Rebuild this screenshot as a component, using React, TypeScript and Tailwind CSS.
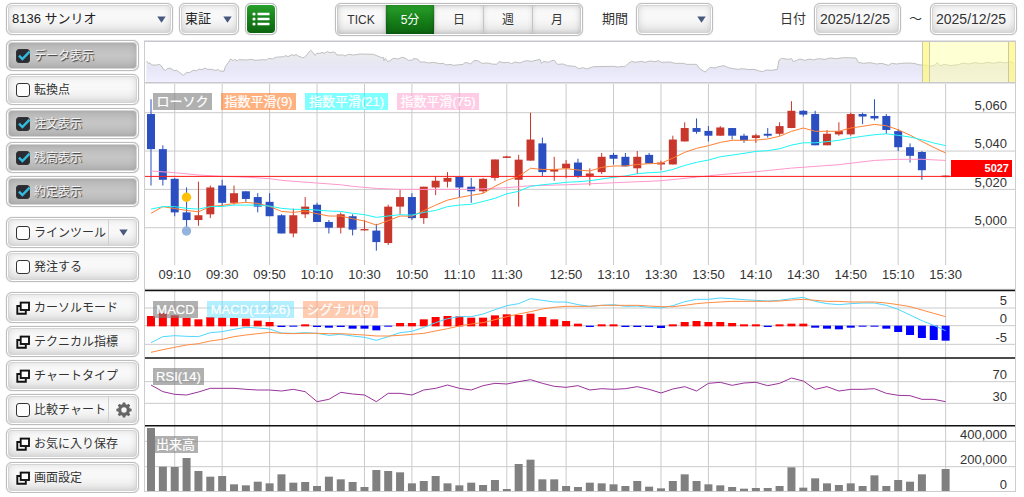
import React, { useState } from "react";

type Candle = ["u" | "d", number, number, number, number];

// Direction, high, body top, body bottom, low. One entry per five minutes of trading.
const candles: (Candle | null)[] = [
  ["d", 5067, 5059.3, 5041, 5022], ["d", 5043, 5041, 5025, 5022], ["d", 5026, 5025.5, 5008, 5006],
  ["d", 5021, 5008, 5004, 4999], ["u", 5024, 5006.5, 5004, 5001], ["u", 5022, 5021, 5007, 5005],
  ["d", 5025, 5022, 5013, 5011], ["u", 5022, 5018, 5013, 5012], ["d", 5019, 5019, 5015, 5013.5],
  ["d", 5018, 5016, 5011, 5008], ["d", 5018, 5013.5, 5006, 5006], ["d", 5007, 5006.5, 4997, 4997],
  ["u", 5010, 5006.5, 4997, 4995], ["u", 5016, 5011, 5007, 5005], ["d", 5013, 5012, 5003, 5003],
  ["d", 5004, 5003, 5000, 4997], ["u", 5008, 5007, 5000, 4997], ["d", 5007, 5006, 4999, 4996],
  ["u", 5004, 4999.3, 4998.6, 4998.6], ["d", 5002, 4998.5, 4992.5, 4988], ["u", 5012, 5011, 4992, 4991],
  ["u", 5020, 5016, 5011, 5007], ["d", 5018, 5016, 5005, 5004], ["u", 5021.4, 5021.4, 5005, 5002],
  ["u", 5027, 5024.5, 5021, 5017], ["u", 5029, 5026, 5024, 5021], ["d", 5026.5, 5026.5, 5021, 5016],
  ["d", 5026, 5021.4, 5019, 5013], ["u", 5026, 5025.5, 5019, 5018], ["u", 5035.6, 5035.6, 5026, 5024.5],
  ["u", 5037.5, 5037.2, 5036.4, 5036.4], ["u", 5038, 5035.5, 5025, 5011], ["u", 5060, 5046, 5035, 5035],
  ["d", 5047, 5044, 5029, 5027], ["u", 5037, 5030.5, 5029.3, 5024.5], ["u", 5035.3, 5033.4, 5031, 5026],
  ["d", 5036, 5034, 5027, 5026], ["u", 5031, 5028.3, 5027, 5022], ["u", 5039, 5037, 5029, 5028],
  ["d", 5039, 5038, 5036, 5033], ["d", 5039, 5037, 5032, 5032], ["u", 5040, 5037, 5031, 5028],
  ["d", 5039, 5038, 5033.5, 5033.5], ["u", 5035, 5034, 5033, 5030], ["u", 5048, 5046, 5033, 5033],
  ["u", 5055, 5052, 5045, 5045], ["d", 5057, 5052, 5050, 5049], ["d", 5053, 5050.5, 5048, 5045],
  ["u", 5053, 5052.3, 5048, 5048], ["d", 5052, 5052, 5048, 5046], ["d", 5049, 5048, 5045.5, 5044.3],
  ["u", 5049, 5048.2, 5046.8, 5044.3], ["d", 5052, 5049, 5048, 5047], ["u", 5055, 5053, 5049, 5048],
  ["u", 5066, 5061, 5052, 5052], ["d", 5061.3, 5061, 5059, 5058], ["d", 5061, 5059.3, 5043, 5043],
  ["u", 5051, 5049, 5043, 5043], ["u", 5055, 5050.4, 5048.7, 5048], ["u", 5060, 5059.3, 5048.7, 5048],
  ["d", 5060, 5059.3, 5058, 5054], ["d", 5067, 5058.3, 5057, 5056], ["d", 5059.3, 5058.3, 5051, 5049],
  ["d", 5051.5, 5050.4, 5042, 5040], ["d", 5044, 5042, 5037.5, 5034], ["d", 5040, 5039.5, 5030, 5025],
  null, ["u", 5027.2, 5027.2, 5026.4, 5026.4],
];

const ema9 = [
  5007.5, 5011, 5010, 5009, 5008.3, 5011.1, 5011.6, 5012.7, 5013.2, 5012.7, 5011.1, 5008.5, 5008, 5008.7, 5007.3,
  5006.1, 5006.1, 5004.7, 5003.5, 5001.4, 5003.7, 5006.1, 5006, 5008.9, 5011.8, 5014.4, 5015.8, 5016.9, 5017.9,
  5021.6, 5024.7, 5026.8, 5031, 5030.4, 5030.4, 5030.8, 5030.1, 5029.6, 5031.5, 5032.2, 5032.2, 5033, 5033.4,
  5033.6, 5036.3, 5039.3, 5041.4, 5042.8, 5044.5, 5045.6, 5045.6, 5045.7, 5046.3, 5047.7, 5050.3, 5052, 5050.3,
  5050.3, 5050.3, 5052, 5052.9, 5053.9, 5053.2, 5051.1, 5048.3, 5045, 5041.9, 5039,
];
const ema21 = [
  5009.7, 5011, 5011, 5010.1, 5009.7, 5011, 5011.1, 5011.8, 5011.8, 5011.8, 5011.3, 5010.1, 5009.6, 5009.6, 5009.2,
  5008.7, 5008.5, 5007.5, 5006.8, 5005.4, 5006.1, 5006.8, 5006.6, 5008, 5009, 5011, 5011.8, 5012.2, 5013.7, 5015.3,
  5017.7, 5019, 5021.6, 5022.4, 5023, 5023.7, 5024, 5024.5, 5025.4, 5026.3, 5027, 5028.2, 5028.7, 5029, 5030.4,
  5032.5, 5034.1, 5035.3, 5037, 5037.9, 5038.8, 5039.8, 5040.2, 5041.2, 5043.1, 5044.3, 5044.3, 5044.9, 5045.6,
  5046.8, 5047.7, 5048.5, 5049, 5048.2, 5047.3, 5045.9, 5044.2, 5042.8,
];
const ema75: [number, number][] = [
  [0, 5029.6], [2, 5028.7], [4, 5027.5], [6, 5026.8], [8, 5026.4], [10, 5025.6], [11, 5024.7], [14, 5023.3],
  [16, 5022.4], [17, 5021.6], [19, 5020.5], [21, 5020], [27, 5020], [28, 5020.3], [30, 5020.9], [32, 5021.9],
  [35, 5022.4], [40, 5023.7], [43, 5024.5], [46, 5026.4], [48, 5027.7], [51, 5029.2], [54, 5031.1], [58, 5032.9],
  [61, 5035.1], [63, 5035.7], [65, 5035.7], [67, 5035.1],
];

// Indicator samples: thirds of a unit below the top edge of the indicator area.
const histogram = [
  93, 84, 91, 99, 103, 96, 98, 99, 101, 107, 111, 126, 125, 118, 126, 128, 126, 131, 131, 136, 125, 114, 114, 103,
  96, 93, 94, 98, 98, 91, 88, 90, 86, 96, 103, 108, 116, 126, 118, 118, 126, 126, 126, 129, 118, 111, 108, 111, 111,
  114, 118, 118, 126, 118, 116, 116, 128, 131, 133, 128, 125, 125, 131, 141, 150, 159, 165, 167,
];
const macd = [
  173, 155, 152, 154, 155, 143, 140, 133, 127, 129, 132, 144, 145, 143, 145, 151, 148, 153, 157, 166, 155, 143, 139,
  127, 113, 101, 95, 95, 87, 74, 62, 56, 41, 46, 51, 51, 59, 64, 61, 59, 64, 63, 67, 69, 62, 50, 43, 43, 39, 41, 44,
  46, 48, 46, 41, 37, 49, 56, 59, 56, 54, 54, 61, 73, 90, 107, 121, 137,
];
const signal = [
  202, 194, 187, 180, 176, 168, 163, 155, 150, 146, 142, 145, 146, 145, 145, 146, 146, 148, 150, 153, 153, 151, 148,
  145, 138, 131, 123, 117, 113, 104, 95, 87, 80, 72, 67, 64, 64, 64, 61, 61, 61, 61, 63, 65, 65, 61, 56, 53, 51, 49,
  49, 49, 49, 48, 45, 43, 46, 49, 49, 51, 51, 51, 54, 59, 65, 75, 85, 95,
];
const rsi = [
  300, 320, 328, 330, 321, 310, 310, 310, 313, 315, 315, 318, 313, 320, 350, 343, 322, 327, 330, 350, 325, 325, 330,
  315, 310, 300, 310, 315, 302, 295, 297, 290, 284, 295, 304, 307, 302, 315, 311, 313, 311, 305, 313, 324, 312, 305,
  318, 295, 292, 301, 294, 292, 302, 295, 279, 288, 313, 305, 318, 313, 313, 311, 325, 331, 332, 343, 343, 350,
];
const volume = [
  429, 545, 546, 519, 558, 575, 573, 598, 601, 590, 595, 568, 593, 591, 603, 575, 583, 591, 606, 555, 558, 562, 595,
  588, 573, 595, 601, 593, 600, 585, 612, 537, 524, 583, 583, 603, 606, 593, 595, 598, 603, 588, 605, 610, 588, 568,
  588, 598, 601, 606, 611, 609, 609, 603, 547, 608, 580, 595, 600, 595, 603, 571, 603, 585, 590, 568, 618, 552,
];

// Whole-period price line of the range selector, in thirds of a unit.
const overview =
  "440,183 445,190 450,189 455,195 470,195 478,193 485,198 490,208 497,211 503,205 512,205 522,212 530,211 538,217 550,226 560,217 568,218 580,211 590,212 598,207 606,209 615,204 622,208 635,208 645,211 655,209 660,213 672,214 676,200 684,189 692,177 700,182 704,178 712,183 716,179 740,180 755,178 765,181 790,179 800,180 806,175 818,177 826,172 850,170 858,167 864,170 876,164 882,167 888,163 896,169 908,173 914,172 924,160 932,151 936,154 945,166 950,160 960,160 966,157 972,160 982,155 990,158 1000,156 1006,158 1010,165 1030,165 1035,168 1045,163 1060,165 1080,162 1120,163 1135,169 1145,173 1150,172 1152,182 1156,175 1163,185 1170,182 1180,175 1195,177 1205,172 1215,174 1225,181 1238,180 1240,176 1253,177 1260,186 1275,186 1285,189 1300,187 1320,191 1330,190 1338,195 1350,193 1360,196 1390,193 1395,187 1404,189 1412,192 1418,185 1425,181 1436,183 1445,190 1465,189 1475,192 1490,193 1497,185 1512,188 1525,187 1535,191 1545,186 1560,189 1568,185 1580,182 1595,184 1620,178 1624,190 1632,184 1645,187 1655,182 1663,181 1672,193 1690,192 1702,197 1725,199 1736,206 1750,203 1760,207 1780,200 1840,199 1855,201 1867,199 1875,200 1885,190 1895,184 1905,187 1925,184 1935,187 1950,183 1965,185 1975,182 1985,187 2010,186 2025,190 2050,190 2060,193 2090,193 2098,205 2115,216 2122,210 2130,202 2145,204 2155,200 2172,197 2185,203 2200,206 2215,208 2225,206 2250,209 2262,208 2275,212 2287,215 2300,210 2315,211 2332,208 2337,180 2345,175 2365,178 2375,176 2380,185 2390,181 2400,177 2415,181 2430,177 2440,180 2455,176 2475,178 2490,174 2510,176 2530,173 2568,174 2575,187 2590,190 2610,188 2630,192 2645,190 2665,196 2675,190 2690,192 2705,190 2730,189 2745,191 2760,195 2775,195 2790,199 2803,196 2812,188 2820,197 2835,193 2850,197 2875,194 2890,189 2905,192 2925,188 2945,191 2965,187 2980,190 3000,186 3015,189 3030,185 3042,190"
    .split(" ")
    .map((p) => p.split(",").map((n) => Number(n) / 3).join(","))
    .join(" ");

const x = (i: number) => 151 + i * 11.86;
const priceY = (p: number) => 112.7 + (5060 - p) * 1.917;
const panelY = (v: number) => 285 + v / 3;
const line = (values: number[], y: (v: number) => number) => values.map((v, i) => `${x(i)},${y(v)}`).join(" ");

const times: [number, string][] = [
  [2, "09:10"], [6, "09:30"], [10, "09:50"], [14, "10:10"], [18, "10:30"], [22, "10:50"], [26, "11:10"],
  [30, "11:30"], [35, "12:50"], [39, "13:10"], [43, "13:30"], [47, "13:50"], [51, "14:10"], [55, "14:30"],
  [59, "14:50"], [63, "15:10"], [67, "15:30"],
];

const axisLabels: [number, string][] = [
  [110, "5,060"], [148, "5,040"], [187, "5,020"], [225, "5,000"],
  [305, "5"], [323, "0"], [342, "-5"], [379, "70"], [401, "30"],
  [439, "400,000"], [464, "200,000"], [489, "0"],
];

const legends: [number, number, number, string, string][] = [
  [153, 93, 59, "#808080", "ローソク"],
  [221, 93, 75, "#ff6600", "指数平滑(9)"],
  [305, 93, 83, "#00ffff", "指数平滑(21)"],
  [397, 93, 82, "#ff99cc", "指数平滑(75)"],
  [153, 301, 45, "#808080", "MACD"],
  [207, 301, 87, "#66e0ff", "MACD(12,26)"],
  [303, 301, 75, "#ff9966", "シグナル(9)"],
  [153, 368, 51, "#808080", "RSI(14)"],
  [153, 436, 45, "#808080", "出来高"],
];

function Chart() {
  const rows = [
    priceY(5060), priceY(5040), priceY(5020), priceY(5000),
    panelY(69), panelY(122), panelY(178), panelY(290), panelY(355), panelY(469), panelY(545),
  ];
  return (
    <svg viewBox="144 40 872 453" className="block h-auto w-full" role="img" aria-label="株価チャート">
      <defs>
        <linearGradient id="overviewFill" gradientUnits="userSpaceOnUse" x1="0" x2="0" y1="50" y2="82">
          <stop offset="0" stopColor="#ececec" />
          <stop offset="0.55" stopColor="#e6e6f6" />
          <stop offset="1" stopColor="#f0eeff" />
        </linearGradient>
      </defs>

      <polygon points={`146,82 ${overview} 1015,82`} fill="url(#overviewFill)" />
      <polyline points={overview} fill="none" stroke="#c0c0c0" />
      <rect x="922.5" y="42" width="93" height="40.5" fill="#ffffa0" fillOpacity="0.45" />
      <rect x="922.5" y="42" width="7.5" height="40.5" fill="#fff56e" fillOpacity="0.5" />
      <rect x="1008.5" y="42" width="7" height="40.5" fill="#fff56e" fillOpacity="0.5" />
      <path d="M922.5 42V82M929.5 42V82M1008.5 42V82" stroke="#c9c9a8" />
      <path d="M144 41.3H1016M144 82.8H1016" stroke="#c8c8cc" strokeWidth="1.5" />
      <path d="M144.5 41V492M1015.5 41V492M144 289.3H1016M144 491.5H1016" stroke="#cdcdcd" />

      <g stroke="#cbcbcb">
        {rows.map((y) => (
          <path key={y} d={`M145 ${y}H1015`} />
        ))}
        {times.map(([i]) => (
          <path key={i} d={`M${x(i)} 84V265M${x(i)} 291V491`} />
        ))}
      </g>

      {candles.map((c, i) => {
        if (!c) return null;
        const [dir, high, top, bottom, low] = c;
        const color = dir === "u" ? "#c9362b" : "#2b4fc0";
        return (
          <g key={i}>
            <path d={`M${x(i)} ${priceY(high)}V${priceY(low)}`} stroke={color} />
            <rect x={x(i) - 4} y={priceY(top)} width="8" height={priceY(bottom) - priceY(top)} fill={color} />
          </g>
        );
      })}
      <circle cx="186.5" cy="197.3" r="4.7" fill="#ffc107" />
      <circle cx="186.5" cy="231" r="4.7" fill="#94b4dc" />
      <g fill="none">
        <polyline points={ema75.map(([i, p]) => `${x(i)},${priceY(p)}`).join(" ")} stroke="#ff99cc" />
        <polyline points={line(ema9, priceY)} stroke="#ff8033" />
        <polyline points={line(ema21, priceY)} stroke="#1ff5f5" />
      </g>
      <path d="M145 176.4H952" stroke="#ff1a1a" />

      {histogram.map((v, i) => (
        <rect
          key={i}
          x={x(i) - 4}
          y={v < 122 ? panelY(v) : panelY(122)}
          width="8"
          height={v < 122 ? (124 - v) / 3 : (v - 122) / 3}
          fill={v < 122 ? "#ff0000" : "#0000ff"}
        />
      ))}
      {volume.map((v, i) => (
        <rect key={i} x={x(i) - 4} y={panelY(v)} width="8" height={(618 - v) / 3} fill="#808080" />
      ))}
      <g fill="none">
        <polyline points={line(macd, panelY)} stroke="#4fd6ff" />
        <polyline points={line(signal, panelY)} stroke="#ff8c42" />
        <polyline points={line(rsi, panelY)} stroke="#993399" />
      </g>
      <path d="M145 290.5H1015M145 358H1015M145 425.8H1015" stroke="#111" strokeWidth="1.6" />

      <g fontSize="13">
        {legends.map(([lx, ly, w, color, label]) => (
          <g key={label}>
            <rect x={lx} y={ly} width={w} height="17" fill={color} fillOpacity={color === "#808080" ? 0.62 : 0.5} />
            <text x={lx + w / 2} y={ly + 13} textAnchor="middle" fill="#fff" stroke="#fff" strokeWidth="0.2">
              {label}
            </text>
          </g>
        ))}
        <g fill="#333">
          {times.map(([i, label]) => (
            <text key={label} x={x(i)} y="279" textAnchor="middle">
              {label}
            </text>
          ))}
          {axisLabels.map(([y, label]) => (
            <text key={y} x="1007" y={y} textAnchor="end">
              {label}
            </text>
          ))}
        </g>
      </g>
      <rect x="951" y="160" width="61" height="17" fill="#ff0000" />
      <text x="1009" y="172" textAnchor="end" fontSize="11" fontWeight="bold" fill="#fff">
        5027
      </text>
    </svg>
  );
}

const frame =
  "rounded-md border border-[#bdbdbd] shadow-[inset_0_0_0_1px_#fff,inset_0_0_0_2px_#d4d4d4,inset_0_0_7px_2px_rgba(0,0,0,0.13),0_0_1px_#aaa]";
const surface = "bg-linear-to-b from-[#fafafa] via-[#f8f8f8] to-[#e4e4e4]";
const toolRow = `${frame} flex h-[31px] w-full items-center text-xs text-[#333]`;

function Caret() {
  return (
    <svg viewBox="0 0 9 7" className="h-[7px] w-[9px]" aria-hidden="true">
      <path d="M0.3 0.5H8.7L4.5 6.7Z" fill="#48597e" />
    </svg>
  );
}

function Dropdown({ label, options, width }: { label: string; options: string[]; width: string }) {
  return (
    <div className={`relative ${width}`}>
      <select
        aria-label={label}
        id={label}
        className={`${frame} ${surface} h-8 w-full appearance-none pl-[5px] text-[13px] text-[#222]`}
      >
        {options.map((o) => (
          <option key={o}>{o}</option>
        ))}
      </select>
      <span className="pointer-events-none absolute inset-y-0 right-[7px] flex items-center">
        <Caret />
      </span>
    </div>
  );
}

function CheckField({ label, checked = false }: { label: string; checked?: boolean }) {
  return (
    <label className="flex flex-1 items-center gap-1 pl-[9px] whitespace-nowrap">
      <span className="relative flex size-[14px]">
        <input
          type="checkbox"
          defaultChecked={checked}
          className="peer size-[14px] appearance-none rounded-[3px] border border-[#333] bg-white checked:bg-[#2b2c33]"
        />
        <svg viewBox="0 0 14 14" className="pointer-events-none absolute inset-0 hidden overflow-visible peer-checked:block" aria-hidden="true">
          <path d="M3 6.6L6.4 10L13.6 2.6" fill="none" stroke="#32bbdc" strokeWidth="2.4" />
        </svg>
      </span>
      {label}
    </label>
  );
}

function CheckRow({ label, checked, children }: { label: string; checked?: boolean; children?: React.ReactNode }) {
  return (
    <div
      className={`${toolRow} ${surface} has-checked:from-[#b9b9b9] has-checked:via-[#c6c6c6] has-checked:to-[#b4b4b4] has-checked:text-[#f4f4f4] has-checked:[text-shadow:1px_1px_1px_#333]`}
    >
      <CheckField label={label} checked={checked} />
      {children}
    </div>
  );
}

function WindowRow({ label }: { label: string }) {
  return (
    <button type="button" className={`${toolRow} ${surface} gap-1 pl-[9px] whitespace-nowrap`}>
      <svg viewBox="0 0 14 14" className="size-[14px]" fill="none" stroke="#111" strokeWidth="1.9" aria-hidden="true">
        <path d="M4 5H1.3V12.7H9.8V10" />
        <rect x="4.7" y="1.6" width="8.3" height="7.4" fill="#fff" />
      </svg>
      {label}
    </button>
  );
}

function Gear() {
  return (
    <svg viewBox="-8 -8 16 16" className="size-4" aria-hidden="true">
      <circle r="4.3" fill="none" stroke="#666" strokeWidth="3.2" />
      {[0, 45, 90, 135, 180, 225, 270, 315].map((a) => (
        <path key={a} d="M-1.7 -5L-1.2 -7.6H1.2L1.7 -5Z" fill="#666" transform={`rotate(${a})`} />
      ))}
    </svg>
  );
}

const split = "flex h-[27px] w-[30px] items-center justify-center border-l border-[#d0d0d0]";
const green = "bg-linear-to-b from-[#29a02c] via-[#17811a] to-[#0c640f]";

export default function App() {
  const [period, setPeriod] = useState("5分");
  return (
    <div className="bg-white pr-2 pl-[6px] font-['Liberation_Sans','Noto_Sans_CJK_JP',sans-serif]">
      <header className="flex h-10 items-start pt-[3px] text-[13px] text-[#333]">
        <div className="flex gap-[6px]">
          <Dropdown label="銘柄" options={["8136 サンリオ"]} width="w-[167px]" />
          <Dropdown label="市場" options={["東証"]} width="w-[60px]" />
          <button type="button" aria-label="銘柄一覧" className="size-8 rounded-md border border-[#bdbdbd] bg-white p-px shadow-[0_0_1px_#aaa]">
            <span className={`${green} flex size-7 items-center justify-center rounded-sm`}>
              <svg viewBox="0 0 18 14" className="h-[14px] w-[18px]" fill="#fff" aria-hidden="true">
                <circle cx="2" cy="2" r="1.6" />
                <circle cx="2" cy="7" r="1.6" />
                <circle cx="2" cy="12" r="1.6" />
                <path d="M5.5 0.7H17.5V3.3H5.5ZM5.5 5.7H17.5V8.3H5.5ZM5.5 10.7H17.5V13.3H5.5Z" />
              </svg>
            </span>
          </button>
        </div>

        <div className={`${frame} ${surface} ml-[58px] flex h-[33px] w-[248px] p-px text-xs`}>
          {["TICK", "5分", "日", "週", "月"].map((p) => (
            <button
              key={p}
              type="button"
              aria-pressed={p === period}
              onClick={() => setPeriod(p)}
              className={
                p === period
                  ? `${green} flex-1 border-l border-[#c4c4c4] text-white shadow-[inset_0_0_4px_rgba(0,0,0,0.3)]`
                  : "flex-1 border-l border-[#c4c4c4] shadow-[inset_0_0_5px_rgba(0,0,0,0.12)] first:border-l-0"
              }
            >
              {p}
            </button>
          ))}
        </div>

        <div className="ml-[19px] flex items-center gap-2">
          <label htmlFor="期間">期間</label>
          <Dropdown label="期間" options={[""]} width="w-[77px]" />
        </div>

        <div className="-mr-px ml-auto flex items-center gap-2">
          <label htmlFor="from">日付</label>
          <input id="from" defaultValue="2025/12/25" className={`${frame} ${surface} h-8 w-[87px] px-[5px] text-sm text-[#333]`} />
          <span>〜</span>
          <input aria-label="終了日" defaultValue="2025/12/25" className={`${frame} ${surface} h-8 w-[87px] px-[5px] text-sm text-[#333]`} />
        </div>
      </header>

      <main className="flex items-start gap-[5px]">
        <aside className="flex w-[133px] shrink-0 flex-col gap-[10px]">
          <div className="flex flex-col gap-[3px]">
            <CheckRow label="データ表示" checked />
            <CheckRow label="転換点" />
            <CheckRow label="注文表示" checked />
            <CheckRow label="残高表示" checked />
            <CheckRow label="約定表示" checked />
          </div>
          <div className="flex flex-col gap-[3px]">
            <CheckRow label="ラインツール">
              <button type="button" aria-label="ラインツールの種類" className={split}>
                <Caret />
              </button>
            </CheckRow>
            <CheckRow label="発注する" />
          </div>
          <div className="flex flex-col gap-[3px]">
            <WindowRow label="カーソルモード" />
            <WindowRow label="テクニカル指標" />
            <WindowRow label="チャートタイプ" />
            <CheckRow label="比較チャート">
              <button type="button" aria-label="比較チャートの設定" className={split}>
                <Gear />
              </button>
            </CheckRow>
            <WindowRow label="お気に入り保存" />
            <WindowRow label="画面設定" />
          </div>
        </aside>
        <section className="min-w-0 flex-1">
          <Chart />
        </section>
      </main>
    </div>
  );
}
